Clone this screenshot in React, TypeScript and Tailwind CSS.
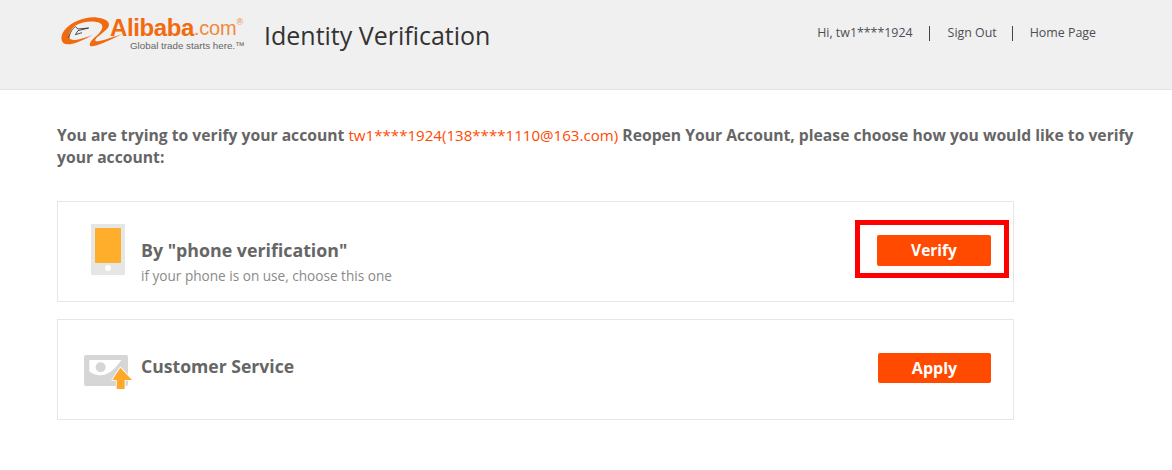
const fontStack = { fontFamily: '"Open Sans", "Noto Sans", sans-serif' };

function Logo() {
  return (
    <div className="flex items-start w-[190px] h-[36px]">
      <svg width="70" height="36" viewBox="0 0 210 108" className="shrink-0">
        <path
          d="M120 11C90 5 42 20 19 49C5 68 8 91 28 91C50 91 85 74 105 62C80 72 50 82 38 76C28 70 34 50 50 36C72 22 105 20 120 25C136 30 138 42 123 58C110 72 96 80 95 92C97 104 125 94 192 60C140 78 114 86 112 80C110 72 132 60 147 45C162 28 148 14 120 11Z"
          fill="#f26a0f"
        />
        <path
          d="M32 72C36 56 44 42 52 38L60 45L92 42L60 50L52 62L72 56"
          fill="none"
          stroke="#2f2f2f"
          strokeWidth="2.5"
        />
      </svg>
      <div className="flex flex-col -ml-[18px] mt-[2px]">
        <div className="flex items-start h-[25px] leading-[24px] whitespace-nowrap font-['Liberation_Sans',sans-serif]">
          <span className="text-[24px] font-bold text-[#f26a0f] tracking-[-0.4px]">Alibaba</span>
          <span className="text-[20px] text-[#f2883c] tracking-[-0.2px]">.com</span>
          <span className="text-[9px] leading-[9px] text-[#f2883c] mt-[2px]">®</span>
        </div>
        <span className="ml-[20px] text-[9.8px] leading-[10px] text-[#666666] whitespace-nowrap font-['Liberation_Sans',sans-serif]">
          Global trade starts here.™
        </span>
      </div>
    </div>
  );
}

function PhoneIcon() {
  return (
    <svg width="34" height="52" viewBox="0 0 34 52" className="block">
      <rect x="0" y="0" width="34" height="51" fill="#e6e6e6" />
      <rect x="4" y="4" width="26" height="35" rx="1" fill="#ffae2c" />
      <circle cx="17" cy="44" r="3" fill="#ffffff" />
    </svg>
  );
}

function ServiceIcon() {
  return (
    <svg width="56" height="44" viewBox="0 0 168 132" className="block">
      <rect x="12" y="15" width="132" height="93" rx="6" fill="#d6d6d6" />
      <path d="M28 30H124C106 55 85 78 58 76C45 75 35 70 28 64Z" fill="#ffffff" />
      <circle cx="62" cy="52" r="15" fill="#d6d6d6" />
      <path
        d="M121 53L156 90H134V117H110V90H97Z"
        fill="#ffa92a"
        stroke="#ffffff"
        strokeWidth="5"
        paintOrder="stroke"
        strokeLinejoin="round"
      />
    </svg>
  );
}

export default function App() {
  return (
    <div className="w-[1172px] h-[470px] bg-white overflow-hidden" style={fontStack}>
      <header className="h-[90px] bg-[#f0f0f0] border-b border-[#e4e4e4] flex items-start pl-[58px]">
        <div className="mt-[14px]">
          <Logo />
        </div>
        <h1 className="ml-[16px] mt-[16px] text-[25px] leading-[38px] text-[#333333] whitespace-nowrap">
          Identity Verification
        </h1>
        <nav className="ml-auto mr-[76px] mt-[25px] flex items-center text-[12.4px] leading-[16px] text-[#4d4d55] whitespace-nowrap">
          <span>Hi, tw1****1924</span>
          <span className="ml-[16px] mr-[18px] h-[15px] w-px bg-[#444444]" />
          <span>Sign Out</span>
          <span className="ml-[15px] mr-[17px] h-[15px] w-px bg-[#444444]" />
          <span>Home Page</span>
        </nav>
      </header>

      <main className="pl-[57px] pt-[34px]">
        <p className="w-[1090px] text-[15.7px] leading-[22px] font-bold text-[#666666]">
          You are trying to verify your account{" "}
          <span className="text-[15.1px] font-normal text-[#ff4a00]">tw1****1924(138****1110@163.com)</span> Reopen
          Your Account, please choose how you would like to verify your account:
        </p>

        <section className="mt-[33px] w-[957px] h-[101px] border border-[#e6e6e6] flex items-start pl-[33px] pr-[4px]">
          <div className="mt-[22px]">
            <PhoneIcon />
          </div>
          <div className="ml-[16px] mt-[35px]">
            <h2 className="text-[17.8px] leading-[26px] font-bold text-[#666666]">By "phone verification"</h2>
            <p className="mt-[3px] text-[13.6px] leading-[20px] text-[#8a8a8a]">
              if your phone is on use, choose this one
            </p>
          </div>
          <div className="ml-auto mt-[18px] border-[5px] border-[#ff0000] w-[154px] h-[58px] pl-[17px] pt-[10px]">
            <button className="block w-[114px] h-[31px] rounded-[2px] bg-[#ff4a00] text-white text-[15.5px] font-bold">
              Verify
            </button>
          </div>
        </section>

        <section className="mt-[17px] w-[957px] h-[101px] border border-[#e6e6e6] flex items-start pl-[22px] pr-[22px]">
          <div className="mt-[30px]">
            <ServiceIcon />
          </div>
          <h2 className="ml-[5px] mt-[33px] text-[17.6px] leading-[26px] font-bold text-[#666666]">
            Customer Service
          </h2>
          <button className="ml-auto mt-[33px] w-[113px] h-[30px] rounded-[2px] bg-[#ff4a00] text-white text-[16px] font-bold">
            Apply
          </button>
        </section>
      </main>
    </div>
  );
}
